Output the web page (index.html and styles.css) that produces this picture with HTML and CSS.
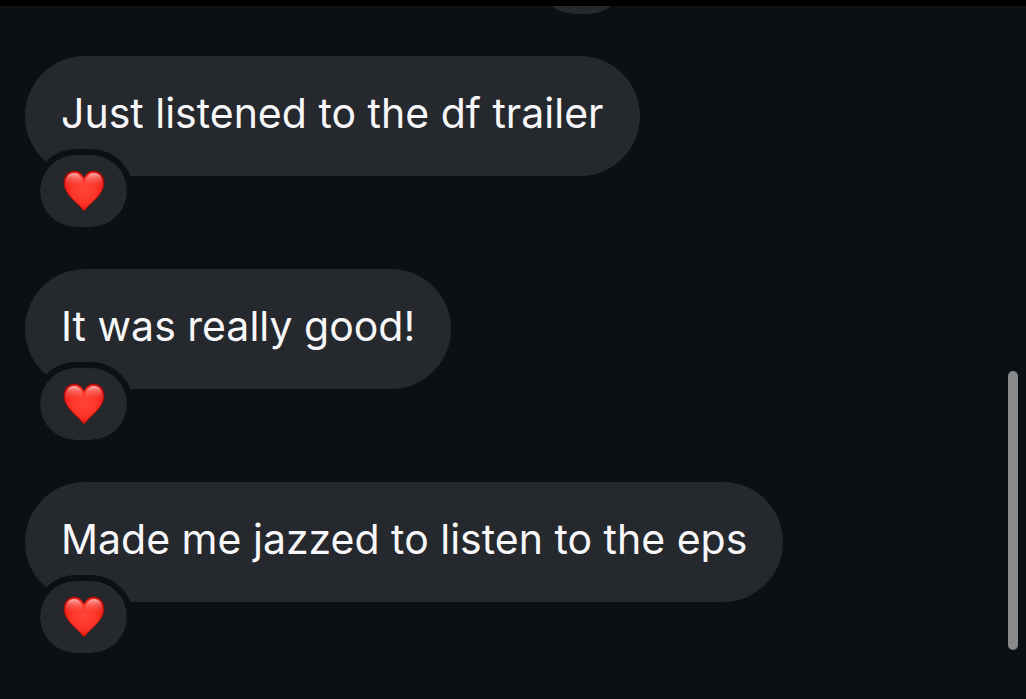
FILE: index.html
```html
<!DOCTYPE html>
<html lang="en">
<head>
  <meta charset="UTF-8" />
  <meta name="viewport" content="width=device-width, initial-scale=1">
  <title>Chat</title>
  <link rel="stylesheet" href="styles.css">
</head>
<body>
  <!-- shared heart, every reaction pulls it in with <use> -->
  <svg class="sprite" aria-hidden="true">
    <defs>
      <radialGradient id="heart-fill" gradientUnits="userSpaceOnUse" cx="21" cy="20" r="25">
        <stop offset="0" stop-color="#ff4538" />
        <stop offset="0.5" stop-color="#fd3529" />
        <stop offset="0.75" stop-color="#ee2018" />
        <stop offset="1" stop-color="#b90c08" />
      </radialGradient>
      <linearGradient id="heart-shine" gradientUnits="userSpaceOnUse" x1="0" y1="2" x2="0" y2="16">
        <stop offset="0" stop-color="#ffd8d4" stop-opacity="0.95" />
        <stop offset="0.4" stop-color="#ff9d95" stop-opacity="0.55" />
        <stop offset="1" stop-color="#ff6a60" stop-opacity="0" />
      </linearGradient>
      <filter id="heart-soften">
        <feGaussianBlur stdDeviation="0.7" />
      </filter>
      <symbol id="heart" viewBox="0 0 42 42">
        <path fill="url(#heart-fill)" stroke="#8f0a06" stroke-opacity="0.8" d="M21 8C19 3.500 15.500 1 11.500 1C5 1 1 6 1 12.500C1 21.500 8 28 14.500 34C17 36.500 19 39 21 41C23 39 25 36.500 27.500 34C34 28 41 21.500 41 12.500C41 6 37 1 30.500 1C26.500 1 23 3.500 21 8Z" />
        <path fill="url(#heart-shine)" filter="url(#heart-soften)" d="M3 16C2 8 5 3 11 3C15.500 3 18 6 19.500 10C20 12 20 14 19 16ZM39 16C40 8 37 3 31 3C26.500 3 24 6 22.500 10C22 12 22 14 23 16Z" />
      </symbol>
    </defs>
  </svg>

  <main class="chat">
    <ul class="messages">
      <li class="message message-earlier">
        <button class="reaction" type="button" aria-label="Heart"><svg class="heart"><use href="#heart" /></svg></button>
      </li>
      <li class="message">
        <p class="bubble">Just listened to the df trailer</p>
        <button class="reaction" type="button" aria-label="Heart"><svg class="heart"><use href="#heart" /></svg></button>
      </li>
      <li class="message">
        <p class="bubble">It was really good!</p>
        <button class="reaction" type="button" aria-label="Heart"><svg class="heart"><use href="#heart" /></svg></button>
      </li>
      <li class="message">
        <p class="bubble">Made me jazzed to listen to the eps</p>
        <button class="reaction" type="button" aria-label="Heart"><svg class="heart"><use href="#heart" /></svg></button>
      </li>
    </ul>
    <div class="scroll-thumb"></div>
  </main>
</body>
</html>
```

FILE: styles.css
```css
:root {
  --bg: #0c0f14;
  --bubble: #25282d;
  --text: #f7f7f9;
}

* {
  box-sizing: border-box;
}

body {
  margin: 0;
  height: 100vh;
  border-top: 6px solid #000;
  background: var(--bg);
  color: var(--text);
  font-family: Inter, "Liberation Sans", sans-serif;
}

.sprite {
  position: absolute;
  width: 0;
  height: 0;
}

.chat {
  position: relative;
  height: 100%;
  overflow: hidden;
}

/* newest message sits at the bottom, older ones get cut off at the top */
.messages {
  display: flex;
  flex-direction: column;
  justify-content: flex-end;
  gap: 42px;
  height: 100%;
  margin: 0;
  padding: 0 25px 46px;
  list-style: none;
}

.message {
  display: flex;
  flex-direction: column;
  align-items: flex-start;
}

.message-earlier {
  padding-left: 51%;
}

.bubble {
  margin: 0;
  padding: 31px 36px 37px;
  border-radius: 60px;
  background: var(--bubble);
  font-size: 41px;
  line-height: 52px;
}

/* the border is the gap cut out of the bubble */
.reaction {
  display: flex;
  align-items: center;
  justify-content: center;
  width: 99px;
  height: 84px;
  margin: -27px 0 -6px 9px;
  padding: 0;
  border: 6px solid var(--bg);
  border-radius: 42px;
  background: var(--bubble);
  background-clip: padding-box;
  cursor: pointer;
}

.heart {
  width: 42px;
  height: 42px;
}

.scroll-thumb {
  position: absolute;
  right: 8px;
  bottom: 49px;
  width: 10px;
  height: 279px;
  border-radius: 5px;
  background: #898a8b;
}
```
